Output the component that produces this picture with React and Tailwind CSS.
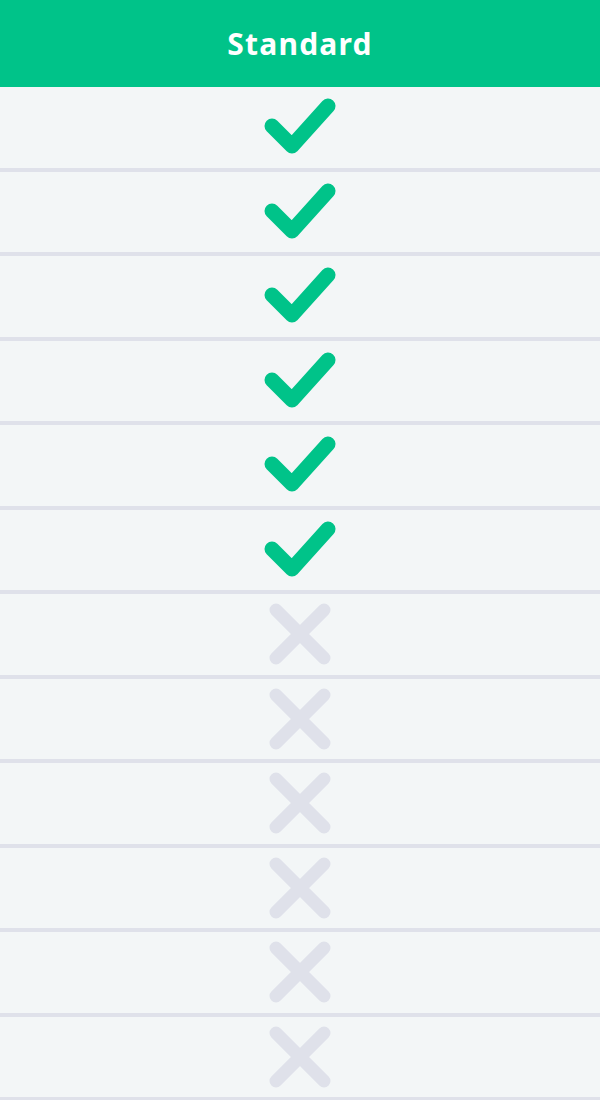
import React from "react";

const Check = () => (
  <svg width="72" height="60" viewBox="0 0 72 60" fill="none" className="mt-[2px]">
    <path d="M8 28 L28 48 L64 8" stroke="#00c389" strokeWidth="15" strokeLinecap="round" strokeLinejoin="round" />
  </svg>
);

const Cross = () => (
  <svg width="62" height="62" viewBox="0 0 62 62" fill="none">
    <path d="M7 7 L55 55 M55 7 L7 55" stroke="#dfe1ea" strokeWidth="13" strokeLinecap="round" />
  </svg>
);

export default function App() {
  const rows = [1, 1, 1, 1, 1, 1, 0, 0, 0, 0, 0, 0];
  return (
    <div className="w-[600px] h-[1100px] overflow-hidden bg-[#f3f6f7] flex flex-col">
      <div className="h-[87px] shrink-0 bg-[#00c389] flex items-center justify-center">
        <span className="text-white text-[30px] font-bold tracking-[1.2px]" style={{ fontFamily: '"Noto Sans", sans-serif' }}>
          Standard
        </span>
      </div>
      {rows.map((r, i) => (
        <div key={i} className="h-[84.5px] shrink-0 border-b-4 border-[#dfe1ea] flex items-center justify-center">
          {r ? <Check /> : <Cross />}
        </div>
      ))}
    </div>
  );
}
